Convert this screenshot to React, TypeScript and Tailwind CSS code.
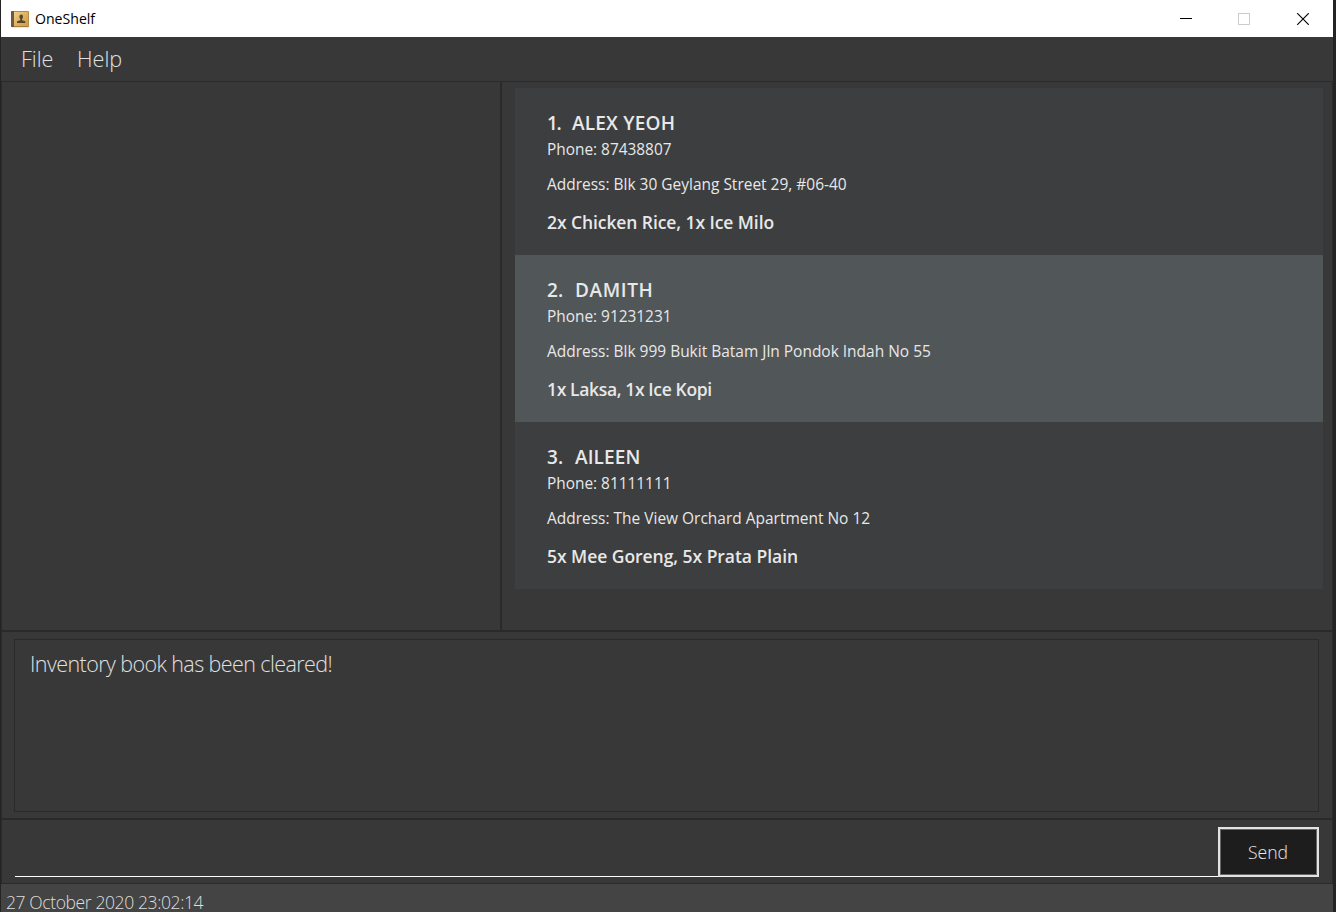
type Order = {
  id: number;
  name: string;
  phone: string;
  address: string;
  items: string;
  selected?: boolean;
  idClass: string;
  nameClass: string;
  itemsClass: string;
};

const orders: Order[] = [
  {
    id: 1,
    name: 'ALEX YEOH',
    phone: '87438807',
    address: 'Blk 30 Geylang Street 29, #06-40',
    items: '2x Chicken Rice, 1x Ice Milo',
    idClass: 'w-[25px] tracking-[-1.5px]',
    nameClass: 'tracking-[0.2px]',
    itemsClass: 'tracking-[-0.08px]',
  },
  {
    id: 2,
    name: 'DAMITH',
    phone: '91231231',
    address: 'Blk 999 Bukit Batam Jln Pondok Indah No 55',
    items: '1x Laksa, 1x Ice Kopi',
    selected: true,
    idClass: 'w-[28px]',
    nameClass: 'tracking-[0.6px]',
    itemsClass: 'tracking-[-0.36px]',
  },
  {
    id: 3,
    name: 'AILEEN',
    phone: '81111111',
    address: 'The View Orchard Apartment No 12',
    items: '5x Mee Goreng, 5x Prata Plain',
    idClass: 'w-[28px]',
    nameClass: 'tracking-[0.1px]',
    itemsClass: 'tracking-[-0.04px]',
  },
];

function AppIcon() {
  return (
    <svg width="19" height="18" viewBox="0 0 19 18" className="shrink-0">
      <defs>
        <linearGradient id="cover" x1="0" y1="0" x2="1" y2="1">
          <stop offset="0" stopColor="#f0cf8c" />
          <stop offset="0.5" stopColor="#e0b260" />
          <stop offset="1" stopColor="#d09c48" />
        </linearGradient>
      </defs>
      <rect x="0" y="1" width="18" height="16" rx="1" fill="#b98a45" />
      <rect x="0" y="1" width="3" height="16" rx="0.8" fill="#6e5a44" />
      <rect x="3" y="2" width="14" height="14" fill="url(#cover)" />
      <rect x="1" y="16.5" width="17" height="1" fill="#00000030" />
      <ellipse cx="10.2" cy="6.8" rx="1.8" ry="2.2" fill="#54452f" />
      <path d="M9.3 7.5h1.8v2.8l3.2 1v1.7H6.1v-1.7l3.2-1z" fill="#54452f" />
    </svg>
  );
}

function TitleBar() {
  return (
    <header className="flex h-[37px] shrink-0 items-center justify-between bg-white pl-[10px] pr-6">
      <div className="flex items-center gap-[5px]">
        <AppIcon />
        <span className="text-[14.1px] leading-5 text-black">OneShelf</span>
      </div>
      <div className="flex items-center gap-[46px]">
        <svg width="12" height="12" viewBox="0 0 12 12" shapeRendering="crispEdges">
          <path d="M0 5.5h12" stroke="#000" />
        </svg>
        <svg width="12" height="12" viewBox="0 0 12 12" shapeRendering="crispEdges">
          <rect x="0.5" y="0.5" width="11" height="11" fill="none" stroke="#ccc" />
        </svg>
        <svg width="13" height="12" viewBox="0 0 13 12">
          <path d="M1.2 0.2l11.6 11.6M12.8 0.2L1.2 11.8" stroke="#000" strokeWidth="1.15" />
        </svg>
      </div>
    </header>
  );
}

function OrderCard({ order }: { order: Order }) {
  return (
    <li className={`flex h-[167px] flex-col items-start pl-8 text-[#e8e8e8] ${order.selected ? 'bg-[#515658]' : 'bg-[#3c3e3f]'}`}>
      <div className="mt-[22px] flex h-[27px] items-center text-[19px] font-semibold">
        <span className={order.idClass}>{order.id}.</span>
        <span className={order.nameClass}>{order.name}</span>
      </div>
      <span className="h-[26px] text-[15.4px] leading-[26px]">Phone: {order.phone}</span>
      <span className="mt-2 h-[26px] text-[15.48px] leading-[26px]">Address: {order.address}</span>
      <span className={`mt-3 h-[26px] text-[17.5px] font-semibold leading-[26px] ${order.itemsClass}`}>{order.items}</span>
    </li>
  );
}

export default function App() {
  return (
    <div className="flex h-[912px] w-[1336px] overflow-hidden bg-[#242424] pl-px font-['Open_Sans','Noto_Sans',sans-serif]">
      <div className="flex w-[1332px] flex-col bg-[#383838]">
        <TitleBar />
        <nav className="flex h-11 shrink-0 items-center gap-[23.5px] pl-5 text-[21.6px] font-light text-[#e0e0e0]">
          <span>File</span>
          <span>Help</span>
        </nav>
        <main className="flex h-[549px] shrink-0 border-l border-t border-[#2a2a2a]">
          <section className="w-[498px]" />
          <section className="flex-1 border-l-2 border-r border-[#2a2a2a] pl-[13px] pr-[9px] pt-[6px]">
            <ul>
              {orders.map((order) => (
                <OrderCard key={order.id} order={order} />
              ))}
            </ul>
          </section>
        </main>
        <section className="h-[188px] shrink-0 border-x border-t-2 border-[#2a2a2a] pb-[6px] pl-3 pr-[13px] pt-[7px]">
          <div className="h-[173px] border border-[#2a2a2a] pl-[15px] pt-2 text-[21.5px] font-light leading-8 tracking-[-0.59px] text-[#e0e0e0]">
            Inventory book has been cleared!
          </div>
        </section>
        <section className="flex h-[66px] shrink-0 border-x border-b border-t-2 border-[#2a2a2a] pl-[13px] pr-[13px] pt-[7px]">
          <div className="h-[50px] flex-1 border-b border-white" />
          <button className="h-[50px] w-[101px] border-2 border-[#e2e2e2] bg-[#1d1d1d] pr-px pt-px text-[17.6px] font-light text-[#e8e8e8] shadow-[inset_0_0_0_1px_#666]">
            Send
          </button>
        </section>
        <footer className="h-7 shrink-0 bg-[#444] pl-[5px] pt-[9px] text-[17.5px] font-light leading-[19px] tracking-[-0.39px] text-[#dedede]">
          27 October 2020 23:02:14
        </footer>
      </div>
      <div className="w-[3px] bg-[#242424]" />
    </div>
  );
}
